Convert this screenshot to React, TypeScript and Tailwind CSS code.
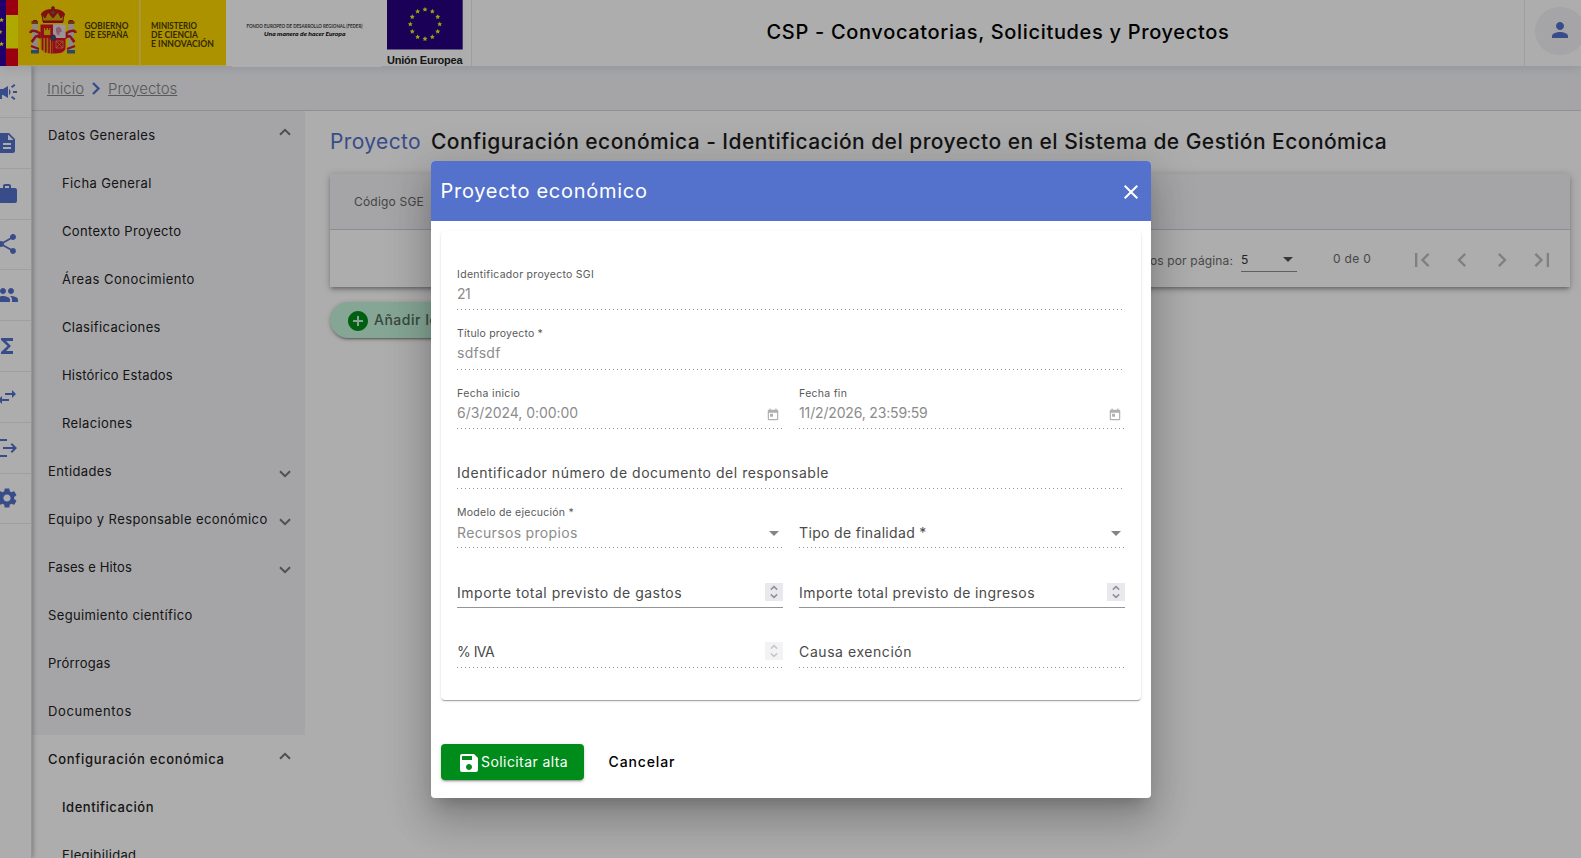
import React from 'react';
import {
  MdCampaign, MdDescription, MdWork, MdShare, MdPeople, MdFunctions, MdSwapHoriz, MdLogout,
  MdSettings, MdPerson, MdFirstPage, MdChevronLeft, MdChevronRight, MdLastPage, MdAddCircle,
  MdClose, MdToday, MdSave,
} from 'react-icons/md';

const railIcons = [MdCampaign, MdDescription, MdWork, MdShare, MdPeople, MdFunctions, MdSwapHoriz, MdLogout, MdSettings];

type Item = { label: string; track: string; child?: boolean; chevron?: 'up' | 'down'; active?: boolean };

const items: Item[] = [
  { label: 'Datos Generales', track: 'tracking-[0.4px]', chevron: 'up' },
  { label: 'Ficha General', track: 'tracking-[0.38px]', child: true },
  { label: 'Contexto Proyecto', track: 'tracking-[0.33px]', child: true },
  { label: 'Áreas Conocimiento', track: 'tracking-[0.48px]', child: true },
  { label: 'Clasificaciones', track: 'tracking-[0.37px]', child: true },
  { label: 'Histórico Estados', track: 'tracking-[0.19px]', child: true },
  { label: 'Relaciones', track: 'tracking-[0.38px]', child: true },
  { label: 'Entidades', track: 'tracking-[0.38px]', chevron: 'down' },
  { label: 'Equipo y Responsable económico', track: 'tracking-[0.4px]', chevron: 'down' },
  { label: 'Fases e Hitos', track: 'tracking-[0.12px]', chevron: 'down' },
  { label: 'Seguimiento científico', track: 'tracking-[0.37px]' },
  { label: 'Prórrogas', track: 'tracking-[0.25px]' },
  { label: 'Documentos', track: 'tracking-[0.62px]' },
  { label: 'Configuración económica', track: 'tracking-[0.72px]', chevron: 'up', active: true },
  { label: 'Identificación', track: 'tracking-[0.54px]', child: true, active: true },
  { label: 'Elegibilidad', track: 'tracking-[0.34px]', child: true, active: true },
];

function Star({ x, y, r = 2.6 }: { x: number; y: number; r?: number }) {
  const pts: string[] = [];
  for (let i = 0; i < 10; i++) {
    const a = (Math.PI / 5) * i - Math.PI / 2;
    const q = i % 2 ? r * 0.5 : r;
    pts.push(`${(x + q * Math.cos(a)).toFixed(2)},${(y + q * Math.sin(a)).toFixed(2)}`);
  }
  return <polygon points={pts.join(' ')} fill="#e0f020" />;
}

function CoatOfArms() {
  return (
    <g>
      <path d="M53 6v5M51 8h4" stroke="#7d2a10" strokeWidth="1.4" />
      <path d="M41 14c2-4 7-5 12-5s10 1 12 5l-2 6H43z" fill="#c8141e" />
      <path d="M42 14l3 4 3-6 5 6 5-6 3 6 3-4-1 8H43z" fill="#d8a800" stroke="#a01a18" strokeWidth=".9" />
      <path d="M43 20.500h20v2.500H43z" fill="#b01020" />
      <circle cx="53" cy="12.500" r="1.600" fill="#4a7a30" />
      <path d="M32.500 24h5v26h-5zM68.500 24h5v26h-5z" fill="#c9ccd6" />
      <path d="M31.500 21h6.500v3h-6.500zM68 21h6.500v3H68z" fill="#9a5a10" />
      <path d="M33 20h4v1.500h-4zM69 20h4v1.500h-4z" fill="#c8141e" />
      <path d="M31 50h8v3.500h-8zM67 50h8v3.500h-8z" fill="#3a6f96" />
      <path d="M30.500 33c0-3 4-3 9 0v4c-4-3-5 2-8 5M75.500 33c0-3-4-3-9 0v4c4-3 5 2 8 5" fill="none" stroke="#d01828" strokeWidth="2.600" />
      <path d="M31 46l8 3M75 46l-8 3" stroke="#d01828" strokeWidth="2.200" />
      <path d="M40.500 24.500H53v13.500H40.500z" fill="#d9162a" />
      <path d="M53 24.500h12.500v13.500H53z" fill="#e6d9e2" />
      <path d="M40.500 38H53v15.500c-7 0-12.500-1-12.500-6z" fill="#e8a010" />
      <path d="M53 38h12.500v9.500c0 5-5.500 6-12.500 6z" fill="#d9162a" />
      <path d="M42.600 38v12M45.800 38v14.500M49 38v15.300M51.800 38v15.500" stroke="#cc1426" strokeWidth="1.500" />
      <path d="M44 28h1v2h1.500v-2h1.500v2h1.300v-2h1v7H44z" fill="#e8c000" />
      <path d="M56 28l3-1.500 2 2 1 3-3 1.500 1 2.500-3-1-1-3z" fill="#c98aa4" />
      <path d="M56 41h7v7h-7zM56 41l7 7M63 41l-7 7" stroke="#e8903a" strokeWidth=".8" fill="none" />
      <ellipse cx="53" cy="37.800" rx="2.600" ry="3" fill="#1c5a86" stroke="#b01020" strokeWidth=".8" />
    </g>
  );
}

function Banner() {
  const ring = Array.from({ length: 12 }, (_, i) => (Math.PI / 6) * i);
  return (
    <svg width="470" height="67" viewBox="0 0 470 67" className="block shrink-0" fontFamily="Lato, sans-serif">
      <rect x="232" width="149" height="67" fill="#fff" />
      <rect width="6" height="66" fill="#3300a0" />
      <Star x={1.5} y={20} /><Star x={0} y={32} /><Star x={1.5} y={44} />
      <rect x="6" width="12" height="66" fill="#e30018" />
      <rect x="6" y="15" width="12" height="33.500" fill="#fffa00" />
      <rect x="18" width="208" height="65.500" fill="#ffd700" />
      <rect x="139" width="1.700" height="65.500" fill="#f8e36a" />
      <CoatOfArms />
      <g fontSize="8.700" fontWeight="700" fill="#4a3c00">
        <text x="84.500" y="29" textLength="44" lengthAdjust="spacingAndGlyphs">GOBIERNO</text>
        <text x="84.500" y="38.300" textLength="43.500" lengthAdjust="spacingAndGlyphs">DE ESPAÑA</text>
        <text x="151" y="29" textLength="46" lengthAdjust="spacingAndGlyphs">MINISTERIO</text>
        <text x="151" y="38.300" textLength="47" lengthAdjust="spacingAndGlyphs">DE CIENCIA</text>
        <text x="151" y="47.200" textLength="63" lengthAdjust="spacingAndGlyphs">E INNOVACIÓN</text>
      </g>
      <text x="246.500" y="28.200" fontSize="4.900" fontWeight="700" fill="#444" textLength="116" lengthAdjust="spacingAndGlyphs">FONDO EUROPEO DE DESARROLLO REGIONAL (FEDER)</text>
      <text x="264" y="35.500" fontSize="6.400" fontWeight="900" fontStyle="italic" fill="#111" textLength="81.500" lengthAdjust="spacingAndGlyphs">Una manera de hacer Europa</text>
      <rect x="387" width="75.700" height="49.500" fill="#290082" />
      {ring.map((a, i) => <Star key={i} x={425 + 14.7 * Math.sin(a)} y={24.2 - 14.7 * Math.cos(a)} r={2.6} />)}
      <text x="387" y="64" fontSize="11" fontWeight="700" fontFamily="Liberation Sans, sans-serif" fill="#222" textLength="75.500">Unión Europea</text>
    </svg>
  );
}

function Chevron({ dir }: { dir: 'up' | 'down' }) {
  return (
    <svg width="12" height="8" viewBox="0 0 12 8" className={dir === 'up' ? 'mb-[6px]' : 'mt-[6px]'}>
      <path d={dir === 'up' ? 'M1 6.800L6 1.800l5 5' : 'M1 1.200L6 6.200l5-5'} fill="none" stroke="#757575" strokeWidth="2" />
    </svg>
  );
}

function Caret({ color }: { color: string }) {
  return <svg width="10" height="5" viewBox="0 0 10 5"><path d="M0 0h10L5 5z" fill={color} /></svg>;
}

function Spinner({ disabled }: { disabled?: boolean }) {
  return (
    <span className={`flex size-[18px] bg-[#e9e9ed] ${disabled ? 'opacity-50' : ''}`}>
      <svg width="18" height="18" viewBox="0 0 18 18" fill="none" stroke="#8f8f9d" strokeWidth="1.500">
        <path d="M5.800 6.600L9 3.600l3.200 3M5.800 11.400l3.200 3 3.200-3" />
      </svg>
    </span>
  );
}

type FieldProps = {
  label?: string; labelClass?: string; text: string; track: string; filled?: boolean; solid?: boolean;
  wide?: boolean; pad?: string; end?: React.ReactNode; endClass?: string;
};

function Field({ label, labelClass = '', text, track, filled, solid, wide, pad = 'pb-[5px]', end, endClass = '' }: FieldProps) {
  return (
    <div className={`flex flex-col justify-end ${wide ? 'col-span-2' : ''}`}>
      {label && <div className={`pl-[0.600px] text-[10.500px] leading-[14px] text-[#595959] ${labelClass}`}>{label}</div>}
      <div className="flex items-end justify-between">
        <span className={`pl-[0.600px] text-sm leading-5 ${pad} ${track} ${filled ? 'text-[#8c8c8c]' : 'text-[#4a4a4a]'}`}>{text}</span>
        <span className={`flex ${endClass}`}>{end}</span>
      </div>
      {solid
        ? <div className="h-px shrink-0 bg-[#949494]" />
        : <div className="h-px shrink-0 bg-[linear-gradient(to_right,rgba(0,0,0,0.42)_0,rgba(0,0,0,0.42)_33%,transparent_0)] bg-[length:4px_100%]" />}
    </div>
  );
}

function Dialog() {
  const today = <MdToday size={14} color="#b0b0b0" />;
  return (
    <div className="flex h-[637px] w-[720px] flex-col overflow-hidden rounded bg-white">
      <div className="flex h-[60px] shrink-0 items-center justify-between bg-[#5471cc] pr-2 pl-[10px] text-white">
        <h2 className="text-xl tracking-[0.72px]">Proyecto económico</h2>
        <MdClose size={24} className="mt-[2px]" />
      </div>
      <div className="mx-[10px] mt-[10px] h-[469px] shrink-0 rounded px-4 pt-[19.400px] shadow-[0_2px_1px_-1px_rgba(0,0,0,0.2),0_1px_1px_0_rgba(0,0,0,0.14),0_1px_3px_0_rgba(0,0,0,0.12)]">
        <div className="grid auto-rows-[59.600px] grid-cols-2 gap-x-4">
          <Field wide filled label="Identificador proyecto SGI" labelClass="mb-[2px] tracking-[0.28px]" text="21" track="tracking-[-0.6px]" />
          <Field wide filled label="Título proyecto *" labelClass="mb-[2px] tracking-[0.19px]" text="sdfsdf" track="tracking-[0.25px]" pad="pb-[6px]" />
          <Field filled label="Fecha inicio" labelClass="mb-[2px] tracking-[0.33px]" text="6/3/2024, 0:00:00" track="tracking-[-0.05px]" end={today} endClass="pr-[3px] pb-[6px]" />
          <Field filled label="Fecha fin" labelClass="mb-[2px] tracking-[0.27px]" text="11/2/2026, 23:59:59" track="tracking-[-0.17px]" end={today} endClass="pr-[3px] pb-[6px]" />
          <Field wide text="Identificador número de documento del responsable" track="tracking-[0.52px]" />
          <Field filled label="Modelo de ejecución *" labelClass="mb-[3px] tracking-[0.24px]" text="Recursos propios" track="tracking-[0.32px]" pad="pb-1" end={<Caret color="#858585" />} endClass="pr-1 pb-[11px]" />
          <Field text="Tipo de finalidad *" track="tracking-[0.32px]" pad="pb-1" end={<Caret color="#858585" />} endClass="pr-1 pb-[11px]" />
          <Field solid text="Importe total previsto de gastos" track="tracking-[0.49px]" pad="pb-1" end={<Spinner />} endClass="pb-[6px]" />
          <Field solid text="Importe total previsto de ingresos" track="tracking-[0.41px]" pad="pb-1" end={<Spinner />} endClass="pb-[6px]" />
          <Field text="% IVA" track="tracking-[-0.560px]" end={<Spinner disabled />} endClass="pb-[7px]" />
          <Field text="Causa exención" track="tracking-[0.56px]" />
        </div>
      </div>
      <div className="mt-11 flex h-9 shrink-0 items-center gap-[25px] px-[10px] text-sm">
        <button className="flex h-9 w-[143px] items-center rounded bg-[#008c1a] pl-4 tracking-[0.41px] text-white shadow-[0_3px_1px_-2px_rgba(0,0,0,0.2),0_2px_2px_0_rgba(0,0,0,0.14),0_1px_5px_0_rgba(0,0,0,0.12)]">
          <MdSave size={24} className="mt-[2px] mr-[0.600px] shrink-0" />
          Solicitar alta
        </button>
        <button className="font-medium tracking-[0.870px] text-black">Cancelar</button>
      </div>
    </div>
  );
}

export default function App() {
  return (
    <div className="relative h-[858px] w-[1581px] overflow-hidden bg-white font-['Inter',sans-serif]">
      <div className="flex h-full flex-col">
        <header className="relative z-20 flex h-[66px] shrink-0 bg-white shadow-[0_2px_10px_rgba(60,70,110,0.14)]">
          <Banner />
          <div className="ml-[1px] flex flex-1 items-center justify-center border-x border-[#e9eaf0] pb-[2px]">
            <h1 className="text-xl font-medium tracking-[0.67px] text-black">CSP - Convocatorias, Solicitudes y Proyectos</h1>
          </div>
          <div className="flex w-[56px] items-start pt-[7px] pl-[10px]">
            <div className="flex h-12 w-[50px] shrink-0 items-center justify-center rounded-full bg-[#f3f4f7] pb-[2px] text-[#5471cc]">
              <MdPerson size={24} />
            </div>
          </div>
        </header>

        <div className="flex min-h-0 flex-1">
          <nav className="relative z-10 flex w-8 shrink-0 flex-col border-r border-[#dcdde0] bg-white pt-[1.200px] shadow-[1px_0_5px_rgba(0,0,0,0.3)]">
            {railIcons.map((Icon, i) => (
              <div key={i} className="flex h-[50.800px] shrink-0 items-center overflow-hidden border-b border-[#e9eaf0] text-[#5471cc]">
                <Icon size={24} className="-ml-[5px] shrink-0" />
              </div>
            ))}
          </nav>

          <div className="flex min-w-0 flex-1 flex-col">
            <div className="flex h-[45px] shrink-0 items-center border-b border-[#d3d4d8] bg-[#f3f4f7] pt-[2px] pl-[15px] text-[15px] font-light text-[#828385]">
              <a className="underline underline-offset-1">Inicio</a>
              <svg width="9" height="14" viewBox="0 0 9 14" className="mx-[7.500px]">
                <path d="M1 1L6.500 6.500 1 12" fill="none" stroke="#5471cc" strokeWidth="2.300" />
              </svg>
              <a className="underline underline-offset-1">Proyectos</a>
            </div>

            <div className="flex min-h-0 flex-1">
              <aside className="flex w-[273px] shrink-0 flex-col overflow-hidden text-[13px] text-[#212121]">
                {items.map((it) => (
                  <div
                    key={it.label}
                    className={`flex h-12 shrink-0 items-center justify-between pr-[14px] ${it.child ? 'pl-[30px]' : 'pl-4'} ${it.active ? 'bg-white' : 'bg-[#f3f4f7]'}`}
                  >
                    <span className={`pt-[2px] ${it.track} ${it.active && it.label !== 'Elegibilidad' ? 'font-medium' : ''}`}>{it.label}</span>
                    {it.chevron && <Chevron dir={it.chevron} />}
                  </div>
                ))}
              </aside>

              <main className="min-w-0 flex-1 pr-[11px] pl-[25px]">
                <div className="flex h-[63px] items-center gap-[10px] pb-px text-[21px]">
                  <span className="tracking-[0.37px] text-[#5471cc]">Proyecto</span>
                  <h2 className="font-medium tracking-[0.455px] whitespace-nowrap text-[#1d1d1d]">
                    Configuración económica - Identificación del proyecto en el Sistema de Gestión Económica
                  </h2>
                </div>
                <section className="h-[113px] bg-white text-xs shadow-[0_3px_3px_-2px_rgba(0,0,0,0.2),0_3px_4px_0_rgba(0,0,0,0.14),0_1px_8px_0_rgba(0,0,0,0.2)]">
                  <div className="flex h-14 items-center border-b border-[#cfd0d4] bg-[#f3f4f7] pl-6 tracking-[0.2px] text-[#666]">Código SGE</div>
                  <div className="flex h-[57px] items-center justify-end pr-2">
                    <span className="mr-2 pt-1 tracking-[0.14px] text-[#6b6b6b]">Elementos por página:</span>
                    <div className="mt-[3px] flex h-[23px] w-14 items-center justify-between border-b border-[#8c8c8c] pr-1 text-[#333]">
                      <span>5</span>
                      <Caret color="#555" />
                    </div>
                    <span className="mr-[31px] ml-9 tracking-[0.29px] text-[#6b6b6b]">0 de 0</span>
                    <div className="flex pt-[2px] text-[#bdbdbd]">
                      {[MdFirstPage, MdChevronLeft, MdChevronRight, MdLastPage].map((Icon, i) => (
                        <div key={i} className="flex w-10 justify-center"><Icon size={28} /></div>
                      ))}
                    </div>
                  </div>
                </section>
                <button className="mt-[15px] flex h-9 w-[230px] items-center gap-1 rounded-full bg-[#c5f5db] pl-4 text-sm font-medium tracking-[0.5px] text-[#55695c] shadow-[0_3px_1px_-2px_rgba(0,0,0,0.2),0_2px_2px_0_rgba(0,0,0,0.14),0_1px_5px_0_rgba(0,0,0,0.2)]">
                  <MdAddCircle size={24} color="#008c1a" className="mt-[2px]" />
                  Añadir Identificación
                </button>
              </main>
            </div>
          </div>
        </div>
      </div>

      <div className="absolute inset-0 z-30 flex items-start justify-center bg-black/32 pt-[161px]">
        <div className="rounded shadow-[0_11px_15px_-7px_rgba(0,0,0,0.2),0_24px_38px_3px_rgba(0,0,0,0.14),0_9px_46px_8px_rgba(0,0,0,0.12)]">
          <Dialog />
        </div>
      </div>
    </div>
  );
}
